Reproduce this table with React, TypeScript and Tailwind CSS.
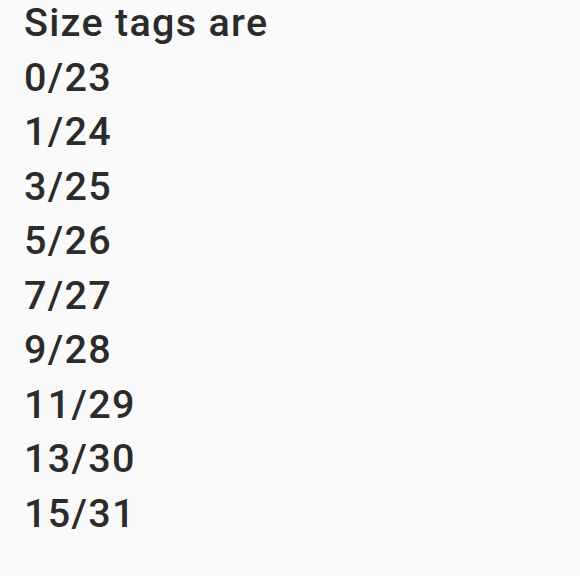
const lines = ['Size tags are', '0/23', '1/24', '3/25', '5/26', '7/27', '9/28', '11/29', '13/30', '15/31'];

const App = () => {
  return (
    <div className="min-h-screen w-full bg-[#fafafa] px-6">
      <div className="-mt-[4px] font-['Roboto',sans-serif] text-[39.5px] font-medium leading-[54.5px] tracking-[1.3px] text-[#2b2b2b]">
        {lines.map((line) => (
          <div key={line}>{line}</div>
        ))}
      </div>
    </div>
  );
};

export default App;
